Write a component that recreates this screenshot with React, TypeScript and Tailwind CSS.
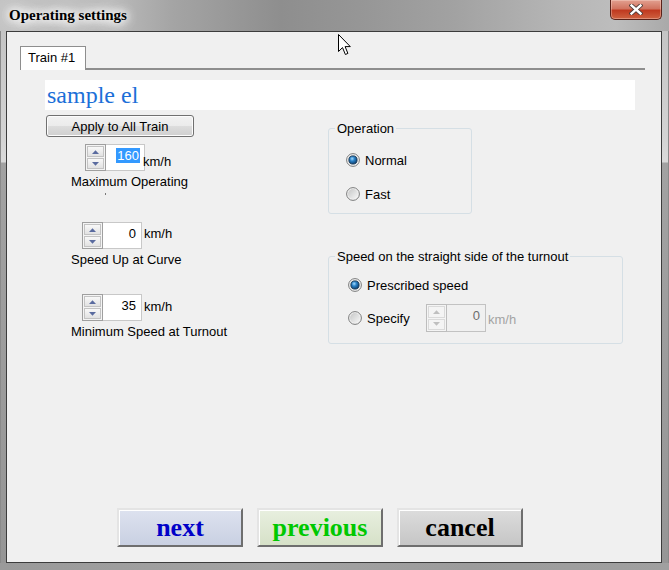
import React from "react";

function Arrow({ up, disabled }: { up: boolean; disabled?: boolean }) {
  const c = disabled ? "#bfbfbf" : "#5a6b9f";
  return (
    <svg width="7" height="4" viewBox="0 0 7 4" className="block">
      {up ? (
        <polygon points="0,4 3.5,0.2 7,4" fill={c} />
      ) : (
        <polygon points="0,0 7,0 3.5,3.8" fill={c} />
      )}
    </svg>
  );
}

function Spinner({
  value,
  selected,
  disabled,
}: {
  value: string;
  selected?: boolean;
  disabled?: boolean;
}) {
  return (
    <div className={`flex w-[60px] ${disabled ? "h-[28px]" : "h-[27px]"}`}>
      <div
        className={`w-[21px] flex flex-col gap-[1px] p-[1px] border ${
          disabled ? "border-[#bdbdbd]" : "border-[#9f9f9f]"
        } bg-[#f4f4f4]`}
      >
        {[true, false].map((up) => (
          <div
            key={String(up)}
            className={`flex-1 flex items-center justify-center border ${
              disabled
                ? "border-[#dadada] bg-[#f4f4f4]"
                : "border-[#c3c3c3] bg-[linear-gradient(to_bottom,#f8f8f8,#e2e2e2)]"
            }`}
          >
            <Arrow up={up} disabled={disabled} />
          </div>
        ))}
      </div>
      <div
        className={`flex-1 flex justify-end items-start pt-[3px] border-y border-r ${
          disabled
            ? "border-[#c2c2c2] bg-[#f0f0f0] text-[#6d6d6d] pr-[5px]"
            : selected
            ? "border-[#c8c8c8] bg-white pr-[4px]"
            : "border-[#c8c8c8] bg-white pr-[5px]"
        }`}
      >
        {selected ? (
          <span className="bg-[#3399ff] text-white px-[1px]">{value}</span>
        ) : (
          <span>{value}</span>
        )}
      </div>
    </div>
  );
}

function Radio({ checked }: { checked?: boolean }) {
  return (
    <svg width="14" height="14" viewBox="0 0 14 14" className="block shrink-0">
      <circle cx="7" cy="7" r="6.4" fill="#f2f2f2" stroke="#7a7b7b" strokeWidth="1" />
      <circle cx="7" cy="7" r="5" fill="url(#rinner)" />
      {checked && (
        <circle cx="7" cy="7" r="4.1" fill="url(#rdot)" stroke="#0f2f4c" strokeWidth="0.8" />
      )}
    </svg>
  );
}

function BigButton({
  label,
  tone,
}: {
  label: string;
  tone: "next" | "prev" | "cancel";
}) {
  const cls =
    tone === "next"
      ? "bg-[linear-gradient(to_bottom,#dde2ef,#c9d0e2)] text-[#0000c8]"
      : tone === "prev"
      ? "bg-[linear-gradient(to_bottom,#e8efdf,#d6e1c8)] text-[#00c800]"
      : "bg-[linear-gradient(to_bottom,#dcdcdc,#c6c6c6)] text-black";
  return (
    <div
      className={`w-[126px] h-[39px] flex items-center justify-center border-2 border-t-[#e4e4e4] border-l-[#e4e4e4] border-b-[#6e6e6e] border-r-[#6e6e6e] shadow-[inset_1px_1px_0_#ffffff] font-['Liberation_Serif',serif] font-bold text-[26px] leading-[29px] ${cls}`}
    >
      {label}
    </div>
  );
}

export default function App() {
  return (
    <div className="relative w-[669px] h-[570px] overflow-hidden flex flex-col bg-[#9b9b9b] font-['Liberation_Sans',Arial,sans-serif] text-[13px] leading-[15px] text-black">
      <svg width="0" height="0" className="absolute">
        <defs>
          <linearGradient id="rinner" x1="0" y1="0" x2="1" y2="1">
            <stop offset="0" stopColor="#c6c7c7" />
            <stop offset="1" stopColor="#f7f7f7" />
          </linearGradient>
          <radialGradient id="rdot" cx="0.4" cy="0.35" r="0.7">
            <stop offset="0" stopColor="#a6dcff" />
            <stop offset="0.4" stopColor="#2a82c8" />
            <stop offset="1" stopColor="#0a3866" />
          </radialGradient>
        </defs>
      </svg>

      {/* Title bar */}
      <div className="h-[31px] shrink-0 flex items-start bg-[linear-gradient(to_right,#c4c4c4_0%,#bcbcbc_16%,#a4a4a4_26%,#8e8e8e_42%,#979797_55%,#a2a2a2_68%,#b6b6b6_84%,#bdbdbd_92%,#a9a9a9_100%)]">
        <div className="pl-[9px] pt-[7px] font-['Liberation_Serif',serif] font-bold text-[15px] leading-[17px] text-black [text-shadow:0_0_8px_#ffffff,0_0_10px_#ffffff,0_0_14px_#ffffff,0_0_20px_#ffffff]">
          Operating settings
        </div>
        <div className="ml-auto mr-[7px] w-[52px] h-[20px] rounded-b-[5px] border border-t-0 border-[#5a2219] bg-[linear-gradient(to_bottom,#e2a090_0%,#d17460_45%,#c03a20_55%,#cf6240_100%)] shadow-[inset_0_0_0_1px_rgba(255,230,220,0.35)] flex items-center justify-center">
          <svg width="14" height="11" viewBox="0 0 14 11" className="block">
            <path d="M2.5 1.5 L11.5 9.5 M11.5 1.5 L2.5 9.5" stroke="#4a3a36" strokeWidth="4.2" strokeLinecap="square" />
            <path d="M2.5 1.5 L11.5 9.5 M11.5 1.5 L2.5 9.5" stroke="#ffffff" strokeWidth="2.4" strokeLinecap="square" />
          </svg>
        </div>
      </div>

      <div className="flex flex-1">
        <div className="w-[6px] bg-[linear-gradient(to_bottom,#c4c4c4_0px,#d4d4d4_110px,#dadada_131px,#a2a2a2_132px,#969696_100%)] border-l border-[#8a8a8a]" />

        {/* Client area */}
        <div className="w-[656px] border border-[#3c3c3c] bg-[#f0f0f0] flex flex-col">
          {/* Tabs */}
          <div className="flex items-end h-[24px] mt-[14px] ml-[13px] mr-[16px]">
            <div className="h-[24px] w-[66px] border-t border-l border-r border-[#8e8e8e] bg-white pl-[7px] pt-[3px]">
              Train #1
            </div>
            <div className="flex-1 h-[2px] bg-[#8e8e8e]" />
          </div>

          {/* Name field */}
          <div className="mt-[10px] ml-[38px] w-[590px] h-[30px] bg-white pl-[2px] font-['Liberation_Serif',serif] text-[24px] leading-[30px] text-[#1c6fd8]">
            sample el
          </div>

          {/* Main content */}
          <div className="flex pl-[38px]">
            <div className="w-[283px] flex flex-col">
              <div className="mt-[5px] ml-[1px] w-[148px] h-[22px] rounded-[3px] border border-[#707070] bg-[linear-gradient(to_bottom,#f2f2f2_0%,#ebebeb_50%,#dddddd_51%,#cfcfcf_100%)] shadow-[inset_0_0_0_1px_#fcfcfc] flex items-center justify-center">
                Apply to All Train
              </div>

              <div className="mt-[7px] ml-[40px] flex items-start">
                <Spinner value="160" selected />
                <span className="mt-[10px] -ml-[2px]">km/h</span>
              </div>
              <div className="mt-[3px] ml-[26px]">Maximum Operating</div>
              <div className="mt-[4px] ml-[60px] w-[1px] h-[2px] bg-[#777]" />

              <div className="mt-[27px] ml-[37px] flex items-start">
                <Spinner value="0" />
                <span className="mt-[4px] ml-[2px]">km/h</span>
              </div>
              <div className="mt-[3px] ml-[26px]">Speed Up at Curve</div>

              <div className="mt-[27px] ml-[37px] flex items-start">
                <Spinner value="35" />
                <span className="mt-[5px] ml-[2px]">km/h</span>
              </div>
              <div className="mt-[3px] ml-[26px]">Minimum Speed at Turnout</div>
            </div>

            <div className="flex flex-col">
              <fieldset className="mt-[11px] w-[144px] border border-[#d5dfe5] rounded-[3px] pt-[14px] pb-[9px]">
                <legend className="ml-[6px] px-[2px] leading-[15px]">Operation</legend>
                <div className="pl-[17px] flex flex-col gap-[14px]">
                  <div className="h-[20px] flex items-center">
                    <Radio checked />
                    <span className="ml-[5px]">Normal</span>
                  </div>
                  <div className="h-[20px] flex items-center">
                    <Radio />
                    <span className="ml-[5px]">Fast</span>
                  </div>
                </div>
              </fieldset>

              <fieldset className="mt-[35px] w-[295px] border border-[#d5dfe5] rounded-[3px] pt-[11px] pb-[11px]">
                <legend className="ml-[6px] px-[2px] leading-[15px]">
                  Speed on the straight side of the turnout
                </legend>
                <div className="pl-[19px] flex flex-col gap-[9px]">
                  <div className="h-[20px] flex items-center">
                    <Radio checked />
                    <span className="ml-[5px]">Prescribed speed</span>
                  </div>
                  <div className="h-[28px] flex items-center">
                    <Radio />
                    <span className="ml-[5px] w-[59px]">Specify</span>
                    <div className="flex items-start">
                      <Spinner value="0" disabled />
                      <span className="mt-[8px] ml-[2px] text-[#a3a3a3]">km/h</span>
                    </div>
                  </div>
                </div>
              </fieldset>
            </div>
          </div>

          {/* Bottom buttons */}
          <div className="mt-auto mb-[15px] ml-[110px] flex gap-[14px]">
            <BigButton label="next" tone="next" />
            <BigButton label="previous" tone="prev" />
            <BigButton label="cancel" tone="cancel" />
          </div>
        </div>

        <div className="flex-1 bg-[linear-gradient(to_bottom,#c4c4c4_0px,#d4d4d4_110px,#dadada_131px,#a2a2a2_132px,#969696_100%)] border-r border-[#8a8a8a]" />
      </div>

      <div className="h-[7px] shrink-0 bg-[linear-gradient(to_right,#9a9a9a,#a3a3a3_40%,#9c9c9c_70%,#a0a0a0)]" />

      {/* Mouse cursor */}
      <svg
        width="13"
        height="22"
        viewBox="0 0 13 22"
        className="absolute left-[338px] top-[34px]"
      >
        <path
          d="M0.5 0.5 L0.5 17.5 L4.5 13.6 L7.4 20.5 L9.9 19.4 L7.1 12.6 L12.3 12.6 Z"
          fill="#ffffff"
          stroke="#000000"
          strokeWidth="1"
          strokeLinejoin="miter"
        />
      </svg>
    </div>
  );
}
